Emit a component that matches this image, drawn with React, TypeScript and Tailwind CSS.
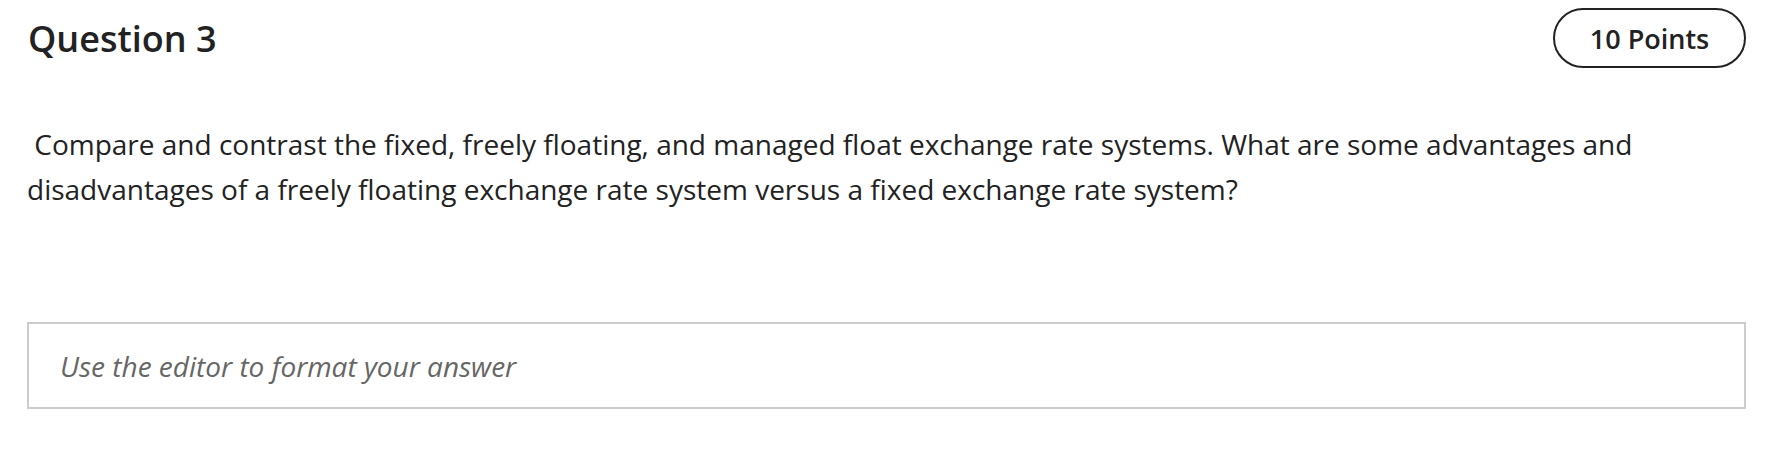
export default function App() {
  return (
    <div className="min-h-[450px] bg-white pl-[27px] pr-[22px] pt-[8px] font-['Open_Sans',sans-serif] text-[#222]">
      {/* Header */}
      <div className="flex items-center justify-between">
        <h2 className="pl-[1px] text-[36px] font-semibold leading-[59px]">Question 3</h2>
        <div className="flex h-[60px] w-[193px] items-center justify-center rounded-full border-2 border-[#222] pt-[2px] text-[27px] font-semibold">
          10 Points
        </div>
      </div>

      {/* Prompt */}
      <p className="mt-[54px] text-[28px] leading-[45px] text-[#222]">
        &nbsp;Compare and contrast the fixed, freely floating, and managed float exchange rate systems. What are some
        advantages and disadvantages of a freely floating exchange rate system versus a fixed exchange rate system?
      </p>

      {/* Answer box */}
      <div className="mt-[110px] flex h-[87px] items-center border-2 border-[#ccc] px-[31px]">
        <span className="text-[28px] italic text-[#666]">Use the editor to format your answer</span>
      </div>
    </div>
  );
}
